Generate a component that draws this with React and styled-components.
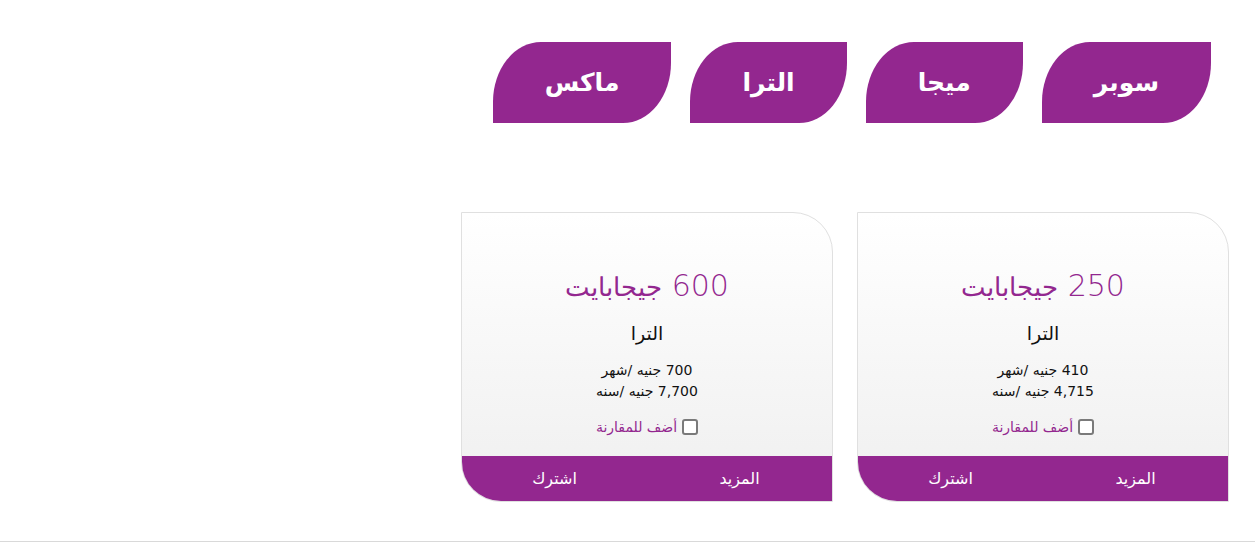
import React from "react";
import styled, { createGlobalStyle } from "styled-components";

const GlobalStyle = createGlobalStyle`
  body {
    margin: 0;
    direction: rtl;
    background: #fff;
    font-family: "DejaVu Sans", "Noto Sans", sans-serif;
  }
`;

const purple = "#93278f";

const tabs = ["سوبر", "ميجا", "الترا", "ماكس"];

const plans = [
  { size: "250", name: "الترا", month: "410", year: "4,715" },
  { size: "600", name: "الترا", month: "700", year: "7,700" },
];

export default function App() {
  return (
    <Page>
      <GlobalStyle />
      <Tabs>
        {tabs.map((t) => (
          <Tab key={t}>{t}</Tab>
        ))}
      </Tabs>
      <Cards>
        {plans.map((p, i) => (
          <Card key={i}>
            <Body>
              <Size>
                {p.size} <Unit>جيجابايت</Unit>
              </Size>
              <Name>{p.name}</Name>
              <Price>{p.month} جنيه /شهر</Price>
              <Price>{p.year} جنيه /سنه</Price>
              <Compare>
                <Box />
                أضف للمقارنة
              </Compare>
            </Body>
            <Actions>
              <Action>المزيد</Action>
              <Action>اشترك</Action>
            </Actions>
          </Card>
        ))}
      </Cards>
    </Page>
  );
}

const Page = styled.div`
  height: 542px;
  border-bottom: 1px solid #d9d9d9;
  padding-top: 42px;
  box-sizing: border-box;
`;

const Tabs = styled.div`
  display: flex;
  gap: 19px;
  padding-right: 44px;
`;

const Tab = styled.div`
  height: 81px;
  padding: 0 52px;
  display: flex;
  align-items: center;
  justify-content: center;
  background: ${purple};
  color: #fff;
  font-size: 25px;
  font-weight: bold;
  border-top-left-radius: 48px 60px;
  border-bottom-right-radius: 48px 60px;
`;

const Cards = styled.div`
  display: flex;
  gap: 24px;
  padding-right: 26px;
  margin-top: 89px;
`;

const Card = styled.div`
  width: 372px;
  height: 290px;
  box-sizing: border-box;
  border: 1px solid #e0e0e0;
  border-radius: 0 40px 0 40px;
  overflow: hidden;
  display: flex;
  flex-direction: column;
  background: linear-gradient(#ffffff, #efefef);
`;

const Body = styled.div`
  flex: 1;
  display: flex;
  flex-direction: column;
  align-items: center;
  padding-top: 53px;
`;

const Size = styled.div`
  color: ${purple};
  font-size: 30px;
  font-weight: 300;
  line-height: 40px;
`;

const Unit = styled.span`
  font-size: 26px;
`;

const Name = styled.div`
  color: #111;
  font-size: 19px;
  margin-top: 15px;
  margin-bottom: 16px;
`;

const Price = styled.div`
  color: #111;
  font-size: 14px;
  line-height: 21px;
`;

const Compare = styled.label`
  display: flex;
  align-items: center;
  gap: 5px;
  margin-top: 17px;
  color: ${purple};
  font-size: 14px;
`;

const Box = styled.span`
  width: 12px;
  height: 12px;
  border: 2px solid #7a7a7a;
  border-radius: 3px;
  background: #fff;
`;

const Actions = styled.div`
  height: 45px;
  background: ${purple};
  display: grid;
  grid-template-columns: 1fr 1fr;
  align-items: center;
`;

const Action = styled.div`
  color: #fff;
  font-size: 16px;
  text-align: center;
`;
